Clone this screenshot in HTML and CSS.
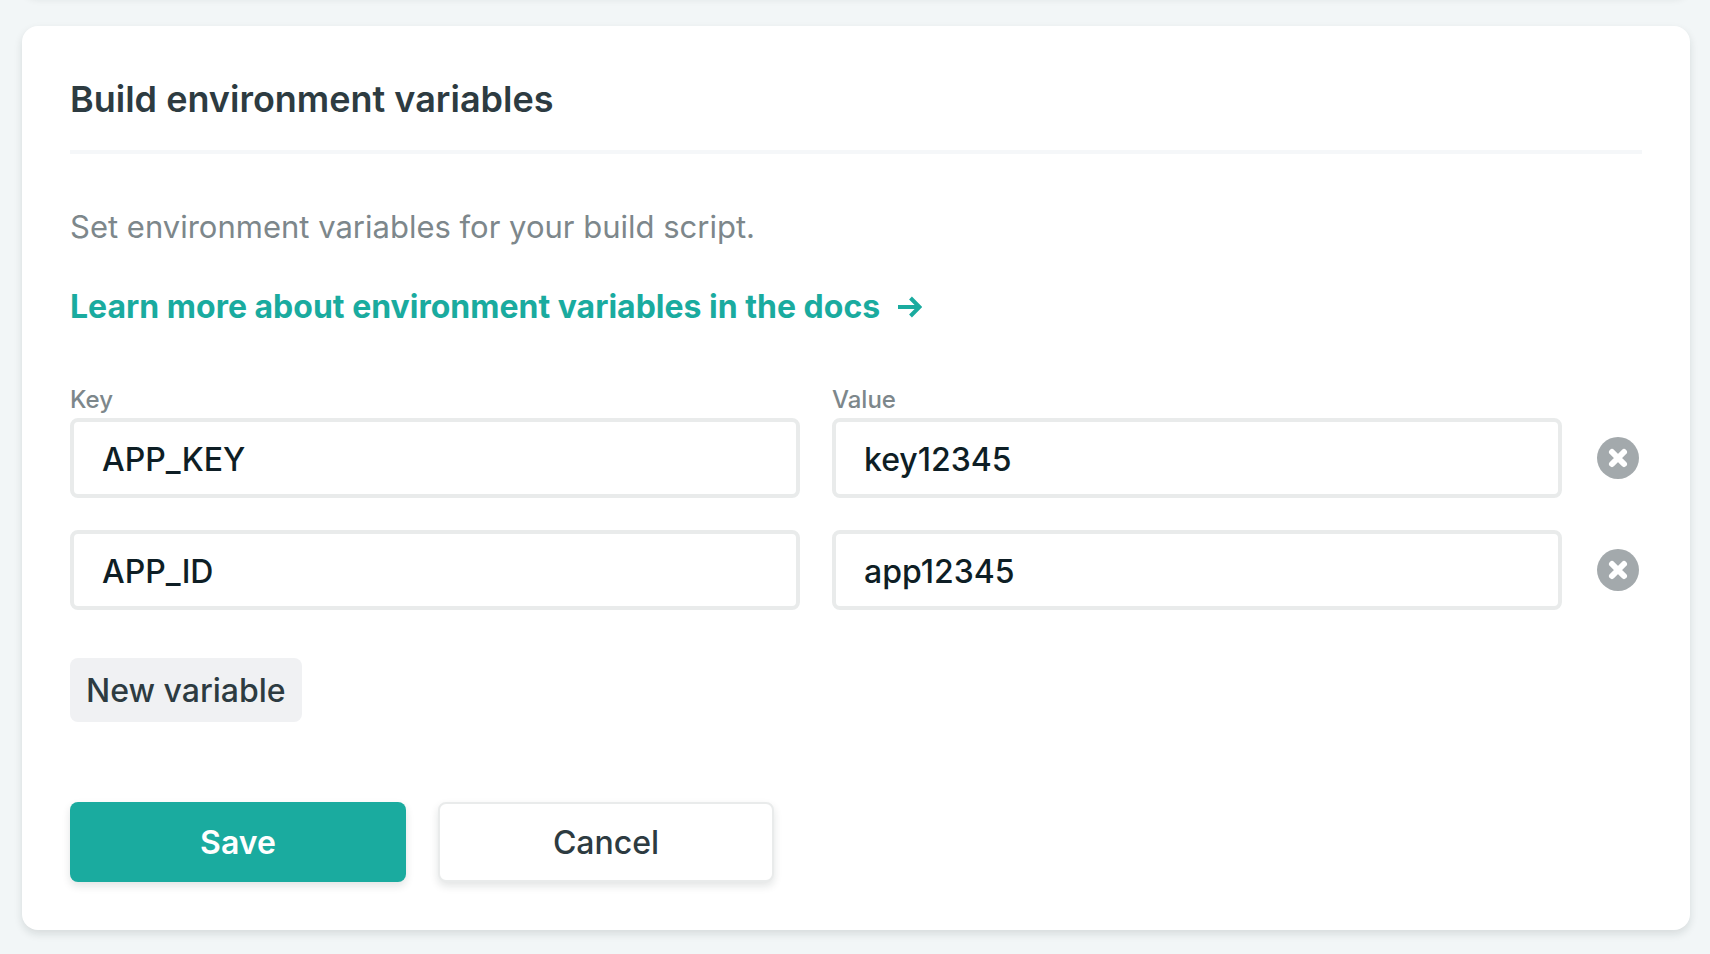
FILE: index.html
```html
<!DOCTYPE html>
<html lang="en">
<head>
<meta charset="utf-8">
<title>Build environment variables</title>
<link rel="stylesheet" href="styles.css">
</head>
<body>
<main class="page">
  <div class="card card-previous"></div>
  <form class="card">
    <h2 class="card-title">Build environment variables</h2>
    <p class="description">Set environment variables for your build script.</p>
    <p class="docs"><a class="docs-link" href="#docs">Learn more about environment variables in the docs<svg class="arrow" viewBox="0 0 24 22" aria-hidden="true"><path d="M0 11H21M12.500 2L21.500 11L12.500 20"/></svg></a></p>

    <div class="variables">
      <label class="label" for="key-1">Key</label>
      <label class="label label-value" for="value-1">Value</label>
      <input class="field" id="key-1" type="text" value="APP_KEY">
      <input class="field" id="value-1" type="text" value="key12345">
      <button class="remove" type="button" aria-label="Remove APP_KEY"><svg class="remove-icon" viewBox="0 0 42 42" aria-hidden="true"><circle cx="21" cy="21" r="21"/><path d="M15 15L27 27M27 15L15 27"/></svg></button>
      <input class="field second-row" type="text" value="APP_ID" aria-label="Key">
      <input class="field second-row" type="text" value="app12345" aria-label="Value">
      <button class="remove second-row" type="button" aria-label="Remove APP_ID"><svg class="remove-icon" viewBox="0 0 42 42" aria-hidden="true"><circle cx="21" cy="21" r="21"/><path d="M15 15L27 27M27 15L15 27"/></svg></button>
    </div>

    <button class="new-variable" type="button">New variable</button>

    <div class="actions">
      <button class="button save" type="submit">Save</button>
      <button class="button cancel" type="button">Cancel</button>
    </div>
  </form>
</main>
</body>
</html>
```
FILE: styles.css
```css
* {
  box-sizing: border-box;
}

body {
  margin: 0;
  background: #f2f6f7;
  color: #2d3b41;
  font-family: Inter, "Liberation Sans", sans-serif;
  font-size: 32px;
  line-height: 50px;
}

.page {
  padding: 0 20px 24px 22px;
  overflow: hidden;
}

.card {
  padding: 48px;
  border-radius: 16px;
  background: #fff;
  box-shadow: 0 4px 8px rgba(14, 30, 37, 0.12);
}

.card-previous {
  height: 96px;
  margin: -102px 0 32px;
}

.card-title {
  margin: 0;
  padding-bottom: 26px;
  border-bottom: 4px solid #f5f7f9;
  font-size: 36px;
  font-weight: 600;
}

.description {
  margin: 48px 0 30px;
  color: #7d878b;
  font-size: 31px;
}

.docs {
  margin: 0;
}

.docs-link {
  display: inline-flex;
  align-items: center;
  gap: 18px;
  color: #1aab9f;
  font-weight: 700;
  text-decoration: none;
}

.arrow {
  width: 24px;
  height: 22px;
  fill: none;
  stroke: currentColor;
  stroke-width: 4;
}

.variables {
  display: grid;
  grid-template-columns: 1fr 1fr 48px;
  column-gap: 32px;
  margin-top: 50px;
}

.label {
  color: #7d878b;
  font-size: 24px;
  font-weight: 500;
  line-height: 36px;
}

.label-value {
  grid-column: 2 / 4;
}

.field {
  width: 100%;
  height: 80px;
  padding: 2px 28px 0;
  border: 4px solid #e9ebeb;
  border-radius: 8px;
  background: #fff;
  color: #0e1e25;
  font: inherit;
  font-weight: 500;
}

.second-row {
  margin-top: 32px;
}

.remove {
  display: flex;
  align-items: center;
  justify-content: center;
  height: 80px;
  padding: 0;
  border: 0;
  background: none;
}

.remove-icon {
  width: 42px;
  height: 42px;
  fill: #a3a9ac;
}

.remove-icon path {
  stroke: #fff;
  stroke-width: 6;
  stroke-linecap: round;
}

.new-variable {
  display: block;
  height: 64px;
  margin-top: 48px;
  padding: 2px 16px 0;
  border: 0;
  border-radius: 8px;
  background: #f0f1f3;
  color: #2d3b41;
  font: inherit;
  font-weight: 500;
}

.actions {
  display: flex;
  gap: 32px;
  margin-top: 80px;
}

.button {
  width: 336px;
  height: 80px;
  padding: 2px 16px 0;
  border: 0;
  border-radius: 8px;
  box-shadow: 0 4px 8px rgba(14, 30, 37, 0.12);
  font: inherit;
}

.save {
  background: #1aab9f;
  color: #fff;
  font-weight: 600;
}

.cancel {
  border: 2px solid #e9ebeb;
  background: #fff;
  color: #2d3b41;
  font-weight: 500;
}
```
